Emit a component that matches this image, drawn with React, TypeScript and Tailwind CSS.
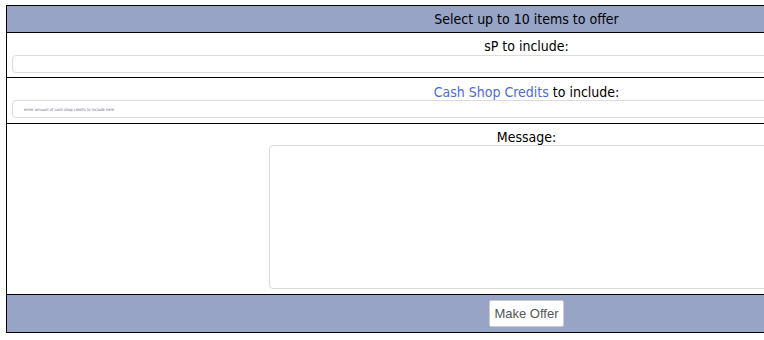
export default function App() {
  return (
    <div className="min-h-[340px] overflow-hidden bg-white pl-[6px] pt-[5px] font-['DejaVu_Sans_Condensed','DejaVu_Sans',sans-serif] text-[14px] text-black">
      <div className="w-[1041px] border border-black">
        <div className="flex h-[27px] items-center justify-center border-b border-black bg-[#97a4c5]">
          Select up to 10 items to offer
        </div>

        <div className="flex flex-col items-center border-b border-black px-[5px] pt-[5px] pb-[4px]">
          <div className="leading-[16px]">sP to include:</div>
          <input
            type="text"
            className="mt-[1px] h-[18px] w-full rounded-[4px] border border-[#dcdcdc] bg-white outline-none"
          />
        </div>

        <div className="flex flex-col items-center border-b border-black px-[5px] pt-[6px] pb-[5px]">
          <div className="leading-[16px]">
            <a href="#" className="text-[#4d6bd8]">
              Cash Shop Credits
            </a>{" "}
            to include:
          </div>
          <input
            type="text"
            placeholder="enter amount of cash shop credits to include here"
            className="h-[18px] w-full rounded-[4px] border border-[#dcdcdc] bg-white pl-[11px] text-[4px] outline-none placeholder:text-[#6f6f8a]"
          />
        </div>

        <div className="flex flex-col items-center border-b border-black pt-[5px] pb-[5px]">
          <div className="leading-[16px]">Message:</div>
          <textarea className="h-[144px] w-[516px] resize-none rounded-[4px] border border-[#dcdcdc] bg-white outline-none" />
        </div>

        <div className="flex h-[37px] items-center justify-center bg-[#97a4c5]">
          <button className="h-[27px] rounded-[2px] border border-[#cccccc] bg-white px-[4px] font-['Liberation_Sans',Arial,sans-serif] text-[13px] text-[#555]">
            Make Offer
          </button>
        </div>
      </div>
    </div>
  );
}
